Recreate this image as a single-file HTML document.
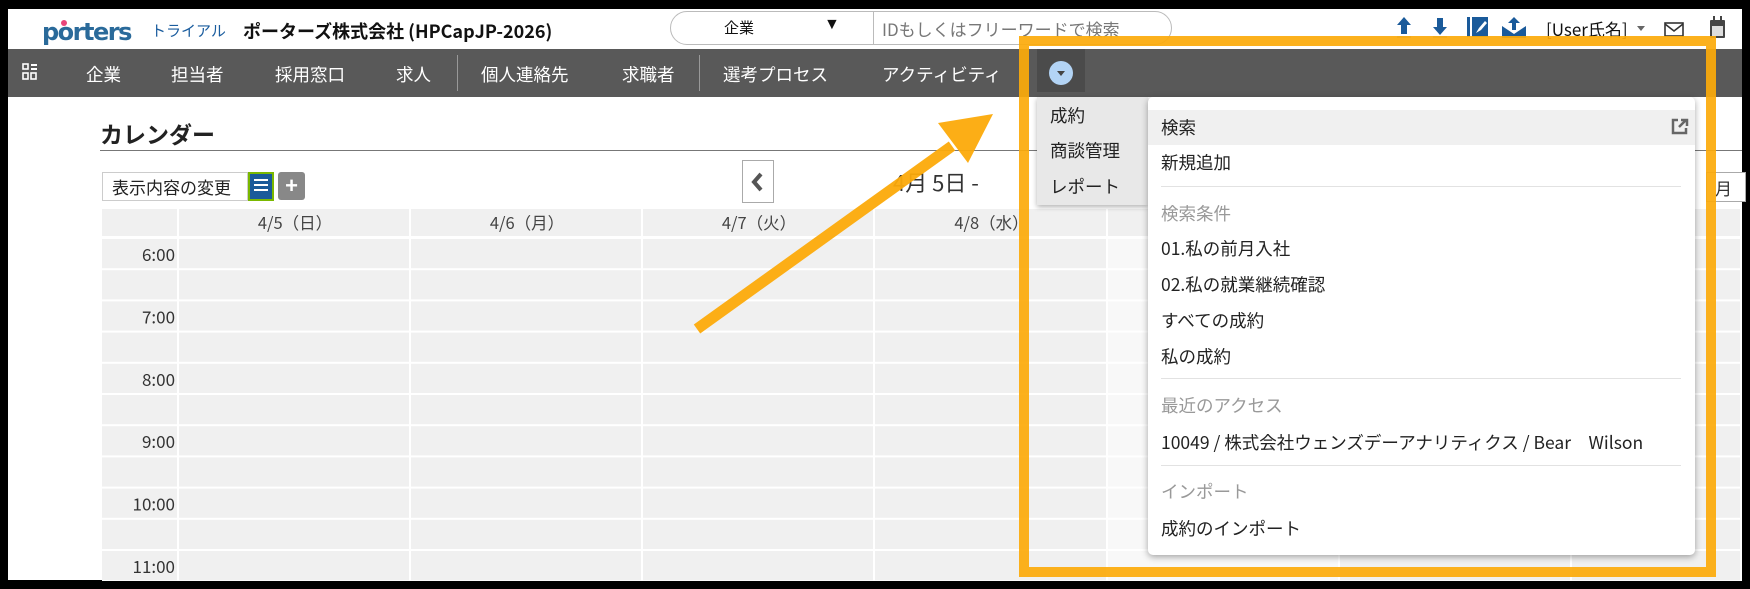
<!DOCTYPE html>
<html><head><meta charset="utf-8"><style>
*{box-sizing:border-box;margin:0;padding:0}
body{width:1750px;height:589px;background:#000;position:relative;overflow:hidden;font-family:"Liberation Sans","Noto Sans CJK JP",sans-serif}
.a{position:absolute}
#page{left:8px;top:9px;width:1734px;height:571px;background:#fff;overflow:hidden}
.nav{color:#fff;font-size:17.5px;top:62px;font-family:"Noto Sans CJK JP",sans-serif}
.cj{font-family:"Noto Sans CJK JP","Liberation Sans",sans-serif}
.mi{left:1161px;font-size:17.5px;color:#222;font-family:"Noto Sans CJK JP",sans-serif;white-space:nowrap}
.mh{left:1161px;font-size:17.5px;color:#999;font-family:"Noto Sans CJK JP",sans-serif}
.sep{left:1161px;width:520px;height:1px;background:#e2e2e2}
</style></head><body>
<div id="page" class="a"></div>
<!-- header -->
<div class="a" style="left:42px;top:17px;font-size:24px;font-weight:bold;color:#2a6a9a;letter-spacing:-1.5px;font-family:'DejaVu Sans',sans-serif;line-height:30px">porters</div>
<div class="a" style="left:61px;top:20px;width:6px;height:6px;border-radius:50%;background:#e8457a"></div>
<div class="a cj" style="left:151px;top:20px;font-size:15px;color:#1a5c9e">トライアル</div>
<div class="a cj" style="left:243px;top:18px;font-size:18px;font-weight:bold;color:#111">ポーターズ株式会社 (HPCapJP-2026)</div>
<div class="a" style="left:670px;top:11px;width:502px;height:34px;border:1px solid #bbb;border-radius:17px;background:#fff"></div>
<div class="a cj" style="left:724px;top:17px;font-size:15px;color:#111">企業</div>
<div class="a" style="left:824px;top:16px;font-size:16px;color:#111">▼</div>
<div class="a" style="left:873px;top:12px;width:1px;height:32px;background:#bbb"></div>
<div class="a cj" style="left:882px;top:16px;font-size:17px;color:#777">IDもしくはフリーワードで検索</div>
<svg class="a" style="left:1395px;top:14px" width="330" height="30">
<path d="M9 3 L16 11 H12 V20 H6 V11 H2 Z" fill="#1a5a9a"/><rect x="2" y="22" width="14" height="2" fill="#1a5a9a" opacity=".5"/>
<path d="M45 21 L52 13 H48 V4 H42 V13 H38 Z" fill="#1a5a9a"/><rect x="38" y="22" width="14" height="2" fill="#1a5a9a" opacity=".5"/>
<rect x="72" y="3" width="3" height="20" fill="#1a5a9a"/><rect x="77" y="3" width="16" height="20" fill="#1a5a9a"/><path d="M81 19 L84 14 L90 7 L92 9 L86 16 Z" fill="#fff"/>
<path d="M107 12 L119 20 L131 12 V24 H107Z" fill="#1a5a9a"/><path d="M119 3 L125 9 H121 V16 H117 V9 H113Z" fill="#1a5a9a"/>
<text x="151" y="22" font-size="17" fill="#111" font-family="Noto Sans CJK JP">[User氏名]</text>
<path d="M242 12 L250 12 L246 17Z" fill="#666"/>
<rect x="270" y="9" width="18" height="13" fill="none" stroke="#333" stroke-width="1.6"/><path d="M270 10 L279 17 L288 10" fill="none" stroke="#333" stroke-width="1.6"/>
<rect x="315" y="6" width="15" height="18" rx="1" fill="#444"/><rect x="317" y="12" width="11" height="10" fill="#ddd"/><rect x="318" y="2" width="2" height="5" fill="#444"/><rect x="325" y="2" width="2" height="5" fill="#444"/>
</svg>
<!-- nav -->
<div class="a" style="left:8px;top:49px;width:1734px;height:48px;background:#595959"></div>
<svg class="a" style="left:22px;top:63px" width="16" height="18"><g fill="none" stroke="#fff" stroke-width="1.6"><rect x="1" y="1" width="5" height="5"/><rect x="1" y="10" width="5" height="6"/><rect x="9" y="10" width="5" height="6"/></g><rect x="9" y="1" width="6" height="2" fill="#fff"/><rect x="9" y="5" width="6" height="2" fill="#fff"/></svg>
<div class="a nav" style="left:86px">企業</div>
<div class="a nav" style="left:171px">担当者</div>
<div class="a nav" style="left:275px">採用窓口</div>
<div class="a nav" style="left:396px">求人</div>
<div class="a" style="left:457px;top:55px;width:1px;height:36px;background:#999"></div>
<div class="a nav" style="left:481px">個人連絡先</div>
<div class="a nav" style="left:622px">求職者</div>
<div class="a" style="left:699px;top:55px;width:1px;height:36px;background:#999"></div>
<div class="a nav" style="left:723px">選考プロセス</div>
<div class="a nav" style="left:882px">アクティビティ</div>
<div class="a" style="left:1037px;top:49px;width:48px;height:43px;background:#4b4b4b"></div>
<div class="a" style="left:1049px;top:61px;width:24px;height:24px;border-radius:50%;background:#b3d4f5"></div>
<div class="a" style="left:1057px;top:71px;width:0;height:0;border-left:4px solid transparent;border-right:4px solid transparent;border-top:5px solid #444"></div>
<!-- content -->
<div class="a cj" style="left:100px;top:116px;font-size:23px;font-weight:bold;color:#222">カレンダー</div>
<div class="a" style="left:100px;top:150px;width:1642px;height:1px;background:#777"></div>
<div class="a cj" style="left:102px;top:172px;width:146px;height:29px;border:1px solid #ccc;font-size:17px;color:#222;padding:1px 0 0 9px;white-space:nowrap">表示内容の変更</div>
<div class="a" style="left:248px;top:172px;width:26px;height:29px;background:#1a5a9a;border:2px solid #7ab800"></div>
<div class="a" style="left:254px;top:179px;width:14px;height:2px;background:#fff;box-shadow:0 5px 0 #fff,0 10px 0 #fff"></div>
<div class="a" style="left:278px;top:172px;width:27px;height:28px;background:#888;border-radius:3px;color:#fff;font-size:22px;font-weight:bold;text-align:center;line-height:28px">+</div>
<div class="a" style="left:742px;top:160px;width:32px;height:43px;border:1px solid #aaa;background:#fff"></div>
<svg class="a" style="left:748px;top:171px" width="20" height="22"><path d="M13 3 L6 11 L13 19" fill="none" stroke="#555" stroke-width="4"/></svg>
<div class="a cj" style="left:893px;top:166px;font-size:22px;color:#333">4月 5日 -</div>
<div class="a cj" style="left:1706px;top:172px;width:40px;height:30px;border:1px solid #aaa;font-size:17px;color:#333;padding:2px 0 0 8px;background:#fff">月</div>
<svg class="a" style="left:102px;top:209px" width="1640" height="372">
<rect width="1640" height="372" fill="#fff"/>
<g fill="#f0f0f0">
<rect x="0" y="0" width="75" height="27"/>
<g id="hdr"></g>
</g>
<g fill="#f0f0f0" id="cells"></g>
<g font-family="Noto Sans CJK JP" font-size="16.5" fill="#444" text-anchor="middle" id="ht"></g>
<g font-family="Noto Sans CJK JP" font-size="17" fill="#333" text-anchor="end" id="tt"></g>
</svg>
<script>
var ns="http://www.w3.org/2000/svg";
var cols=[77,309,541,773,1006,1238,1470,1640];
var days=["4/5（日）","4/6（月）","4/7（火）","4/8（水）","4/9（木）","4/10（金）","4/11（土）"];
var hdr=document.getElementById("hdr"),cells=document.getElementById("cells"),ht=document.getElementById("ht"),tt=document.getElementById("tt");
function r(p,x,y,w,h,f){var e=document.createElementNS(ns,"rect");e.setAttribute("x",x);e.setAttribute("y",y);e.setAttribute("width",w);e.setAttribute("height",h);if(f)e.setAttribute("fill",f);p.appendChild(e);}
for(var i=0;i<7;i++){r(hdr,cols[i],0,cols[i+1]-cols[i]-2,27);
var t=document.createElementNS(ns,"text");t.setAttribute("x",(cols[i]+cols[i+1])/2);t.setAttribute("y",20);t.textContent=days[i];ht.appendChild(t);}
for(var j=0;j<11;j++){var y=30+j*31.2;r(cells,0,y,75,29.2);
for(var i=0;i<7;i++)r(cells,cols[i],y,cols[i+1]-cols[i]-2,29.2,i==4?"#f8f8f8":null);
if(j%2==0){var t=document.createElementNS(ns,"text");t.setAttribute("x",73);t.setAttribute("y",y+22);t.textContent=(6+j/2)+":00";tt.appendChild(t);}}
</script>
<!-- gray submenu -->
<div class="a" style="left:1037px;top:97px;width:111px;height:108px;background:#e8e8e8;box-shadow:0 2px 5px rgba(0,0,0,.3)"></div>
<div class="a cj" style="left:1050px;top:103px;font-size:17.5px;color:#222">成約</div>
<div class="a cj" style="left:1050px;top:138px;font-size:17.5px;color:#222">商談管理</div>
<div class="a cj" style="left:1050px;top:174px;font-size:17.5px;color:#222">レポート</div>
<!-- white panel -->
<div class="a" style="left:1148px;top:97px;width:547px;height:458px;background:#fff;border-radius:5px;box-shadow:0 2px 7px rgba(0,0,0,.35)"></div>
<div class="a" style="left:1148px;top:110px;width:547px;height:35px;background:#f0f0f0"></div>
<div class="a mi" style="top:115px">検索</div>
<svg class="a" style="left:1670px;top:117px" width="20" height="20"><path d="M8 3 H3 V16 H16 V11" fill="none" stroke="#666" stroke-width="2.5"/><path d="M9 10 L16 3 M11 3 H17 V9" fill="none" stroke="#666" stroke-width="2.5"/></svg>
<div class="a mi" style="top:150px">新規追加</div>
<div class="a sep" style="top:186px"></div>
<div class="a mh" style="top:201px">検索条件</div>
<div class="a mi" style="top:236px">01.私の前月入社</div>
<div class="a mi" style="top:272px">02.私の就業継続確認</div>
<div class="a mi" style="top:308px">すべての成約</div>
<div class="a mi" style="top:344px">私の成約</div>
<div class="a sep" style="top:378px"></div>
<div class="a mh" style="top:393px">最近のアクセス</div>
<div class="a mi" style="top:430px">10049 / 株式会社ウェンズデーアナリティクス / Bear　Wilson</div>
<div class="a sep" style="top:465px"></div>
<div class="a mh" style="top:479px">インポート</div>
<div class="a mi" style="top:516px">成約のインポート</div>
<!-- orange annotations -->
<div class="a" style="left:1019px;top:36px;width:697px;height:541px;border:10px solid rgba(252,170,10,.92)"></div>
<svg class="a" style="left:0;top:0" width="1750" height="589">
<path d="M697 329 L952 146" stroke="rgba(252,170,10,.95)" stroke-width="11" fill="none"/>
<path d="M993 114 L938 123 L968 163 Z" fill="rgba(252,170,10,.95)"/>
</svg>
</body></html>
